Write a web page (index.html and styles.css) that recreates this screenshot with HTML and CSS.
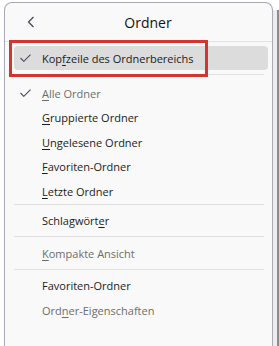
FILE: index.html
```html
<!DOCTYPE html>
<html lang="de">
<head>
    <meta charset="UTF-8">
    <meta name="viewport" content="width=device-width, initial-scale=1.0">
    <title>Ordner</title>
    <link rel="stylesheet" href="styles.css">
</head>
<body>
    <div class="backdrop">
        <div class="panel">
            <header class="panel-header">
                <button class="back" aria-label="Zurück">
                    <svg width="8" height="12" viewBox="0 0 8 12"><path d="M6.5 1 L1.5 6 L6.5 11" fill="none" stroke="#4a4a5e" stroke-width="1.3"/></svg>
                </button>
                <h1>Ordner</h1>
            </header>
            <ul class="menu">
                <li class="item active"><svg class="check" width="11" height="8" viewBox="0 0 11 8"><path d="M0.5 4 L3.8 7.3 L10.5 0.6" fill="none" stroke="#4a4a66" stroke-width="1.1"/></svg>Kop<u>f</u>zeile des Ordnerbereichs</li>
                <li class="sep first"></li>
                <li class="item disabled"><svg class="check" width="11" height="8" viewBox="0 0 11 8"><path d="M0.5 4 L3.8 7.3 L10.5 0.6" fill="none" stroke="#4a4a66" stroke-width="1.1"/></svg><u>A</u>lle Ordner</li>
                <li class="item"><u>G</u>ruppierte Ordner</li>
                <li class="item"><u>U</u>ngelesene Ordner</li>
                <li class="item"><u>F</u>avoriten-Ordner</li>
                <li class="item"><u>L</u>etzte Ordner</li>
                <li class="sep tight"></li>
                <li class="item">Schlagwört<u>e</u>r</li>
                <li class="sep"></li>
                <li class="item disabled"><u>K</u>ompakte Ansicht</li>
                <li class="sep"></li>
                <li class="item">Favoriten-Ordner</li>
                <li class="item disabled">Ord<u>n</u>er-Eigenschaften</li>
            </ul>
            <!-- annotation frame -->
            <div class="highlight-frame"></div>
        </div>
        <div class="scroll-edge"></div>
    </div>
</body>
</html>
```

FILE: styles.css
```css
body {
    margin: 0;
    font-family: "Open Sans", "Noto Sans", sans-serif;
    font-size: 11px;
    color: #1b1b1b;
    background: #fff;
    width: 279px;
    height: 346px;
    overflow: hidden;
}

.backdrop {
    display: flex;
    height: 346px;
    padding-top: 2px;
    padding-left: 4px;
    box-sizing: border-box;
}

.panel {
    position: relative;
    width: 269px;
    height: 360px;
    background: #f9f9f9;
    border: 1px solid #a9a9b6;
    border-bottom: none;
    border-radius: 8px 8px 0 0;
    box-sizing: border-box;
}

.scroll-edge {
    flex: 1;
    margin-top: 8px;
    background: #ececec;
    border-right: 2px solid #8c8c8c;
}

.panel-header {
    display: flex;
    align-items: center;
    height: 38px;
    border-bottom: 1px solid #e2e2e2;
}

.back {
    display: flex;
    align-items: center;
    justify-content: center;
    width: 20px;
    height: 20px;
    margin-left: 16px;
    padding: 0;
    border: none;
    background: none;
}

.panel-header h1 {
    flex: 1;
    margin: 0;
    padding-right: 17px;
    font-size: 14px;
    font-weight: 400;
    color: #111;
    text-align: center;
}

.menu {
    list-style: none;
    margin: 0;
    padding: 4px 4px 0 9px;
}

.item {
    position: relative;
    display: flex;
    align-items: center;
    height: 24.5px;
    padding-left: 28px;
    border-radius: 4px;
    white-space: nowrap;
}

.item u {
    text-underline-offset: 2px;
}

.item.active {
    height: 24px;
    background: #dcdcdc;
}

.item.disabled {
    color: #6d6d6d;
}

.check {
    position: absolute;
    left: 6px;
    top: 8px;
}

.sep {
    height: 1px;
    margin: 3px 4px 4px 0;
    background: #e0e0e0;
}

.sep.first {
    margin: 4px 4px 6px 0;
}

.sep.tight {
    margin-top: 0;
}

.highlight-frame {
    position: absolute;
    left: 4px;
    top: 37px;
    width: 199px;
    height: 37px;
    border: 3px solid #d3362c;
    box-sizing: border-box;
}
```
